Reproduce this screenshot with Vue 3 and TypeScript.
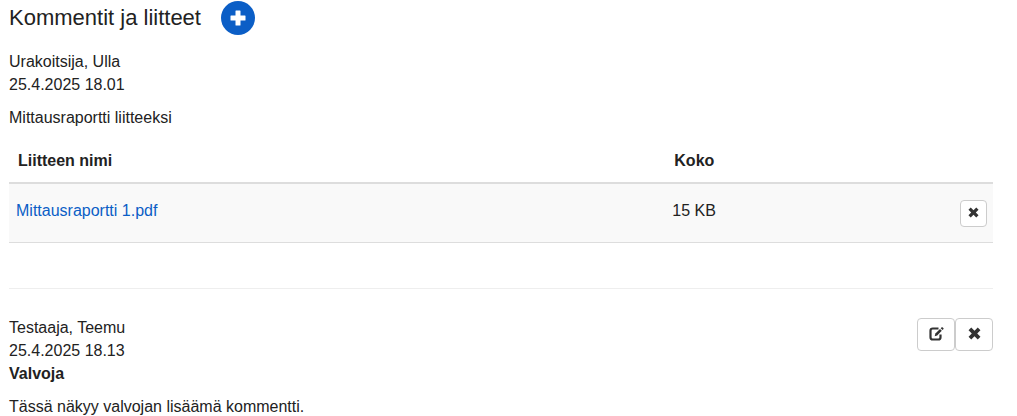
<script setup lang="ts">
interface Attachment {
  name: string
  size: string
}

interface Comment {
  author: string
  date: string
  role?: string
  text: string
  editable: boolean
  attachments: Attachment[]
}

const comments: Comment[] = [
  {
    author: 'Urakoitsija, Ulla',
    date: '25.4.2025 18.01',
    text: 'Mittausraportti liitteeksi',
    editable: false,
    attachments: [{ name: 'Mittausraportti 1.pdf', size: '15 KB' }],
  },
  {
    author: 'Testaaja, Teemu',
    date: '25.4.2025 18.13',
    role: 'Valvoja',
    text: 'Tässä näkyy valvojan lisäämä kommentti.',
    editable: true,
    attachments: [],
  },
]
</script>

<template>
  <main class="panel">
    <header class="heading">
      <h1>Kommentit ja liitteet</h1>
      <button class="add" type="button" aria-label="Lisää kommentti">
        <svg viewBox="0 0 16 16" width="16" height="16" aria-hidden="true">
          <path d="M6 .5h4a.5.5 0 0 1 .5.5v4.500H15a.5.5 0 0 1 .5.5v4a.5.5 0 0 1-.5.5h-4.500V15a.5.5 0 0 1-.5.5H6a.5.5 0 0 1-.5-.5v-4.500H1a.5.5 0 0 1-.5-.5V6a.5.5 0 0 1 .5-.5h4.500V1A.5.5 0 0 1 6 .5z" fill="#fff" />
        </svg>
      </button>
    </header>

    <article v-for="comment in comments" :key="comment.date" class="comment">
      <div class="top">
        <div class="meta">
          <div>{{ comment.author }}</div>
          <div>{{ comment.date }}</div>
          <strong v-if="comment.role">{{ comment.role }}</strong>
        </div>
        <div v-if="comment.editable" class="actions">
          <button class="tool" type="button" aria-label="Muokkaa">
            <svg viewBox="0 0 16 16" width="16" height="16" aria-hidden="true">
              <path d="M10.500 2.500H4.800Q2.500 2.500 2.500 4.800v6.400Q2.500 13.500 4.800 13.500h5.400Q12.500 13.500 12.500 11.200V8.500" fill="none" stroke="#333" stroke-width="2.200" />
              <path d="M6.700 10.200l.7-2.600L12 3l1.800 1.800-4.600 4.600z" fill="#333" />
              <path d="M12.700 2.300l1-1q.4-.3.800 0l1 1q.3.4 0 .8l-1 1z" fill="#333" />
            </svg>
          </button>
          <button class="tool" type="button" aria-label="Poista kommentti">
            <svg viewBox="0 0 12 12" width="13" height="13" aria-hidden="true">
              <path d="M3 .5l3 3 3-3L11.500 3l-3 3 3 3L9 11.500l-3-3-3 3L.5 9l3-3-3-3z" fill="#333" />
            </svg>
          </button>
        </div>
      </div>
      <p>{{ comment.text }}</p>

      <table v-if="comment.attachments.length">
        <thead>
          <tr>
            <th class="name" scope="col">Liitteen nimi</th>
            <th class="size" scope="col">Koko</th>
            <td></td>
          </tr>
        </thead>
        <tbody>
          <tr v-for="file in comment.attachments" :key="file.name">
            <td><a href="#">{{ file.name }}</a></td>
            <td>{{ file.size }}</td>
            <td class="remove">
              <button class="tool small" type="button" aria-label="Poista liite">
                <svg viewBox="0 0 12 12" width="11" height="11" aria-hidden="true">
                  <path d="M3 .5l3 3 3-3L11.500 3l-3 3 3 3L9 11.500l-3-3-3 3L.5 9l3-3-3-3z" fill="#333" />
                </svg>
              </button>
            </td>
          </tr>
        </tbody>
      </table>
    </article>
  </main>
</template>

<style>
body {
  margin: 0;
  background: #fff;
}
</style>

<style scoped>
.panel {
  padding: 1px 24px 0 9px;
  color: #222;
  font: 16px/23px "Liberation Sans", Arial, sans-serif;
}

.heading {
  display: flex;
  align-items: center;
  gap: 20px;
  margin-bottom: 15px;
}

h1 {
  margin: 0;
  font-size: 22px;
  line-height: 32px;
  font-weight: 400;
}

button {
  display: flex;
  align-items: center;
  justify-content: center;
  box-sizing: border-box;
  margin: 0;
  padding: 0;
  cursor: pointer;
}

.add {
  width: 34px;
  height: 34px;
  border: 0;
  border-radius: 50%;
  background: #0b5ec6;
}

.comment + .comment {
  margin-top: 45px;
  padding-top: 27px;
  border-top: 1px solid #eee;
}

.top {
  display: flex;
  align-items: flex-start;
  justify-content: space-between;
}

p {
  margin: 10px 0;
}

.actions {
  display: flex;
  padding-top: 2px;
}

.tool {
  width: 38px;
  height: 33px;
  padding-bottom: 2px;
  border: 1px solid #ccc;
  border-radius: 4px;
  background: #fff;
}

.small {
  width: 27px;
  height: 27px;
}

table {
  width: 100%;
  table-layout: fixed;
  border-collapse: separate;
  border-spacing: 0;
}

th {
  padding: 10px 9px;
  text-align: left;
}

thead th,
thead td {
  border-bottom: 2px solid #ddd;
}

.name {
  width: 66.7%;
  box-sizing: border-box;
}

.size {
  width: 16.6%;
  box-sizing: border-box;
}

tbody td {
  padding: 15px 7px;
  border-bottom: 1px solid #ddd;
  background: #f9f9f9;
  vertical-align: top;
}

tbody .remove {
  padding: 16px 6px 15px;
}

.remove .tool {
  margin-left: auto;
}

a {
  color: #0b5ec6;
  text-decoration: none;
}
</style>
